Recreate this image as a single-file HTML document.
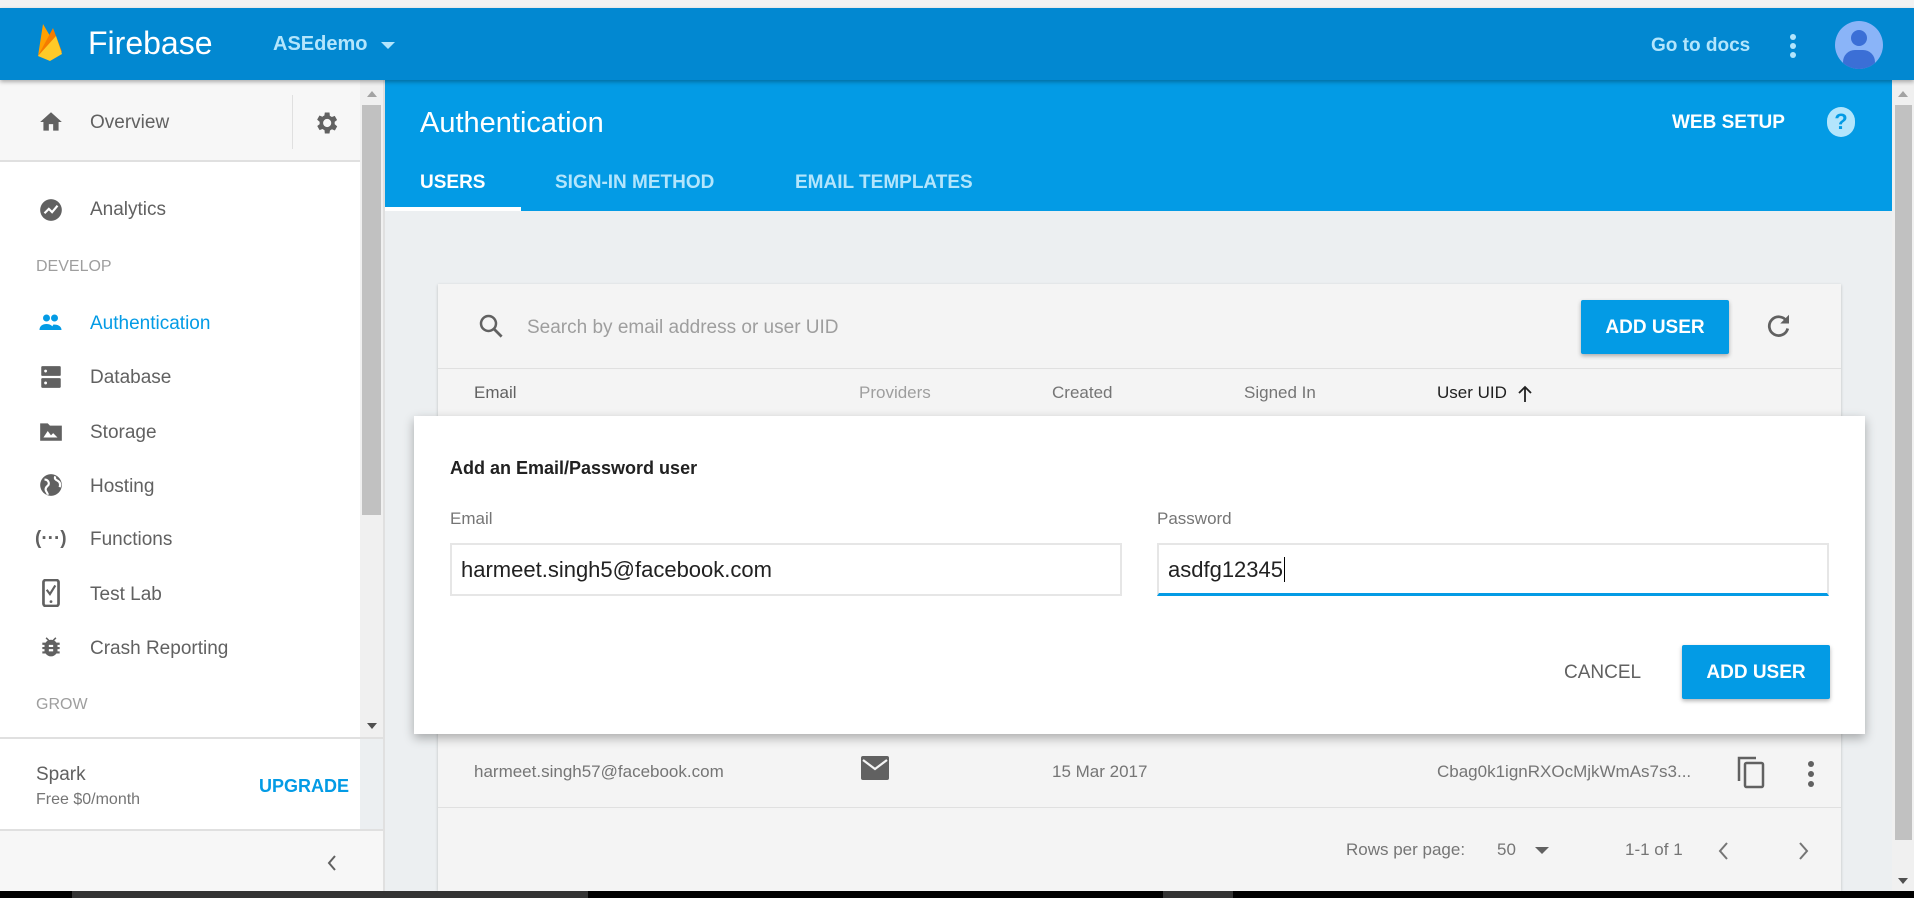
<!DOCTYPE html>
<html><head><meta charset="utf-8"><style>
*{box-sizing:border-box;margin:0;padding:0}
body{width:1914px;height:898px;overflow:hidden;position:relative;background:#eceff1;font-family:"Liberation Sans",Roboto,sans-serif}
.a{position:absolute;white-space:nowrap}
.t{margin-top:2px}
svg{display:block}
</style></head><body>
<div class="a" style="left:0;top:0;width:1914px;height:8px;background:#f2f2f2"></div>
<!-- top bar -->
<div class="a" style="left:0;top:8px;width:1914px;height:72px;background:#0288d1;box-shadow:0 2px 4px rgba(0,0,0,.3);z-index:3">
 <svg class="a" style="left:36px;top:14px" width="28" height="40" viewBox="0 0 28 40"><path d="M2 34 L7 2 L14 14 Z" fill="#ffa000"/><path d="M2 34 L17 6 L26 30 Z" fill="#f57c00"/><path d="M2 34 L20 14 L26 32 L14 39 Z" fill="#ffca28"/></svg>
 <div class="a" style="left:88px;top:17px;font-size:32px;color:#fff">Firebase</div>
 <div class="a" style="left:273px;top:25px;font-size:20px;color:#b3e5fc;font-weight:bold">ASEdemo</div>
 <div class="a" style="left:381px;top:34px;border-left:7px solid transparent;border-right:7px solid transparent;border-top:7px solid #b3e5fc"></div>
 <div class="a" style="left:1651px;top:27px;font-size:19px;color:#b3e5fc;font-weight:bold">Go to docs</div>
 <div class="a" style="left:1790px;top:26px;width:6px;height:6px;border-radius:3px;background:#b3e5fc;box-shadow:0 9px 0 #b3e5fc,0 18px 0 #b3e5fc"></div>
 <div class="a" style="left:1835px;top:13px;width:48px;height:48px;border-radius:24px;background:#8ab4f8;overflow:hidden">
  <div class="a" style="left:16px;top:9px;width:16px;height:16px;border-radius:8px;background:#3b6fd6"></div>
  <div class="a" style="left:8px;top:29px;width:32px;height:24px;border-radius:12px;background:#3b6fd6"></div>
 </div>
</div>
<!-- sidebar -->
<div class="a" style="left:0;top:80px;width:360px;height:811px;background:#fff"></div>
<div class="a" style="left:0;top:80px;width:360px;height:82px;background:#f7f7f7;border-bottom:2px solid #e0e0e0"></div>
<div class="a" style="left:292px;top:95px;width:1px;height:54px;background:#e0e0e0"></div>
<div class="a" style="left:360px;top:80px;width:23px;height:658px;background:#f0f0f0"></div>
<div class="a" style="left:362px;top:105px;width:19px;height:410px;background:#c1c1c1"></div>
<div class="a" style="left:367px;top:91px;border-left:5px solid transparent;border-right:5px solid transparent;border-bottom:6px solid #a3a3a3"></div>
<div class="a" style="left:367px;top:723px;border-left:5px solid transparent;border-right:5px solid transparent;border-top:6px solid #505050"></div>
<div class="a" style="left:383px;top:80px;width:2px;height:811px;background:#e0e0e0"></div>
<svg class="a" style="left:38px;top:109px" width="26" height="26" viewBox="0 0 24 24"><path d="M10 20v-6h4v6h5v-8h3L12 3 2 12h3v8z" fill="#616161"/></svg>
<div class="a" style="left:90px;top:112px;font-size:19px;color:#616161">Overview</div>
<svg class="a" style="left:312px;top:109px" width="28" height="28" viewBox="0 0 24 24"><path d="M19.4 13a7 7 0 000-2l2.1-1.6-2-3.5-2.5 1a7 7 0 00-1.7-1L15 3h-4l-.4 2.6a7 7 0 00-1.7 1l-2.5-1-2 3.5L6.6 11a7 7 0 000 2l-2.1 1.6 2 3.5 2.5-1a7 7 0 001.7 1L11 21h4l.4-2.6a7 7 0 001.7-1l2.5 1 2-3.5zM13 15.5A3.5 3.5 0 1113 8.5a3.5 3.5 0 010 7z" fill="#616161"/></svg>
<svg class="a" style="left:38px;top:197px" width="26" height="26" viewBox="0 0 24 24"><circle cx="12" cy="12" r="10" fill="#616161"/><path d="M6 15l4-4 3 3 5-6" stroke="#fff" stroke-width="2" fill="none"/></svg>
<div class="a" style="left:90px;top:199px;font-size:19px;color:#616161">Analytics</div>
<div class="a" style="left:36px;top:258px;font-size:16px;color:#9e9e9e">DEVELOP</div>
<svg class="a" style="left:37px;top:310px" width="27" height="24" viewBox="0 0 24 24"><circle cx="8" cy="8" r="3.5" fill="#039be5"/><circle cx="16" cy="8" r="3.5" fill="#039be5"/><path d="M1 20c0-4 3-6 7-6s7 2 7 6zM13 20c0-3 1-4 2-5.5 4 0 8 1.5 8 5.5z" fill="#039be5"/></svg>
<div class="a" style="left:90px;top:313px;font-size:19px;color:#039be5">Authentication</div>
<svg class="a" style="left:38px;top:364px" width="26" height="26" viewBox="0 0 24 24"><rect x="3" y="2" width="18" height="9" rx="1" fill="#616161"/><rect x="3" y="13" width="18" height="9" rx="1" fill="#616161"/><circle cx="7" cy="6.5" r="1.3" fill="#fff"/><circle cx="7" cy="17.5" r="1.3" fill="#fff"/></svg>
<div class="a" style="left:90px;top:367px;font-size:19px;color:#616161">Database</div>
<svg class="a" style="left:38px;top:418px" width="26" height="26" viewBox="0 0 24 24"><path d="M2 5h7l2 2h11v14H2z" fill="#616161"/><path d="M5 18l4-6 3 4 2-2 4 4z" fill="#fff"/></svg>
<div class="a" style="left:90px;top:422px;font-size:19px;color:#616161">Storage</div>
<svg class="a" style="left:38px;top:472px" width="26" height="26" viewBox="0 0 24 24"><circle cx="12" cy="12" r="10" fill="#616161"/><path d="M6 7c3 0 4 2 4 4s-3 2-3 5c0 2 2 3 2 5M16 4c-1 2 0 3 2 4s3 3 2 6" stroke="#fff" stroke-width="2" fill="none"/></svg>
<div class="a" style="left:90px;top:476px;font-size:19px;color:#616161">Hosting</div>
<div class="a" style="left:35px;top:528px;font-size:19px;color:#616161;font-weight:bold">(···)</div>
<div class="a" style="left:90px;top:529px;font-size:19px;color:#616161">Functions</div>
<svg class="a" style="left:38px;top:579px" width="26" height="28" viewBox="0 0 24 26"><rect x="5" y="1" width="14" height="24" rx="2" fill="none" stroke="#616161" stroke-width="2.5"/><path d="M8 10l3 4 5-8" stroke="#616161" stroke-width="2" fill="none"/><circle cx="12" cy="21" r="1.3" fill="#616161"/></svg>
<div class="a" style="left:90px;top:584px;font-size:19px;color:#616161">Test Lab</div>
<svg class="a" style="left:38px;top:634px" width="26" height="26" viewBox="0 0 24 24"><path d="M20 8h-3a6 6 0 00-2-2l2-2-1-1-2.5 2.5a6 6 0 00-3 0L8 3 7 4l2 2a6 6 0 00-2 2H4v2h2v2H4v2h2v2H4v2h3a6 6 0 0010 0h3v-2h-2v-2h2v-2h-2v-2h2zm-6 8h-4v-2h4zm0-4h-4v-2h4z" fill="#616161"/></svg>
<div class="a" style="left:90px;top:638px;font-size:19px;color:#616161">Crash Reporting</div>
<div class="a" style="left:36px;top:696px;font-size:16px;color:#9e9e9e">GROW</div>
<div class="a" style="left:0;top:737px;width:383px;height:2px;background:#e0e0e0"></div>
<div class="a" style="left:36px;top:764px;font-size:19px;color:#616161">Spark</div>
<div class="a" style="left:36px;top:791px;font-size:16px;color:#757575">Free $0/month</div>
<div class="a" style="left:259px;top:776px;font-size:18px;color:#039be5;font-weight:bold">UPGRADE</div>
<div class="a" style="left:0;top:829px;width:383px;height:62px;background:#f7f7f7;border-top:2px solid #e0e0e0"></div>
<svg class="a" style="left:325px;top:853px" width="14" height="20" viewBox="0 0 14 20"><path d="M10 3L4 10l6 7" stroke="#616161" stroke-width="2" fill="none"/></svg>
<!-- header -->
<div class="a" style="left:385px;top:80px;width:1507px;height:131px;background:#039be5"></div>
<div class="a" style="left:420px;top:107px;font-size:29px;color:#fff">Authentication</div>
<div class="a" style="left:1672px;top:112px;font-size:19px;color:#fff;font-weight:bold">WEB SETUP</div>
<div class="a" style="left:1827px;top:107px;width:28px;height:30px;border-radius:15px;background:#b3e5fc;color:#039be5;font-weight:bold;font-size:22px;text-align:center;line-height:30px">?</div>
<div class="a" style="left:420px;top:172px;font-size:19px;color:#fff;font-weight:bold">USERS</div>
<div class="a" style="left:555px;top:172px;font-size:19px;color:#b3e5fc;font-weight:bold">SIGN-IN METHOD</div>
<div class="a" style="left:795px;top:172px;font-size:19px;color:#b3e5fc;font-weight:bold">EMAIL TEMPLATES</div>
<div class="a" style="left:385px;top:207px;width:136px;height:4px;background:#fff"></div>
<!-- right scrollbar -->
<div class="a" style="left:1892px;top:80px;width:22px;height:811px;background:#f0f0f0"></div>
<div class="a" style="left:1895px;top:105px;width:17px;height:735px;background:#c1c1c1"></div>
<div class="a" style="left:1898px;top:91px;border-left:5px solid transparent;border-right:5px solid transparent;border-bottom:6px solid #a3a3a3"></div>
<div class="a" style="left:1898px;top:878px;border-left:5px solid transparent;border-right:5px solid transparent;border-top:6px solid #505050"></div>
<!-- card -->
<div class="a" style="left:438px;top:284px;width:1403px;height:607px;background:#f4f4f4;box-shadow:0 1px 3px rgba(0,0,0,.2)"></div>
<svg class="a" style="left:476px;top:311px" width="30" height="30" viewBox="0 0 24 24"><circle cx="10" cy="10" r="6" stroke="#616161" stroke-width="2" fill="none"/><path d="M14.5 14.5l6 6" stroke="#616161" stroke-width="2.2"/></svg>
<div class="a" style="left:527px;top:317px;font-size:19px;color:#9e9e9e">Search by email address or user UID</div>
<div class="a" style="left:1581px;top:300px;width:148px;height:54px;background:#039be5;border-radius:2px;box-shadow:0 2px 4px rgba(0,0,0,.3);color:#fff;font-weight:bold;font-size:19px;text-align:center;line-height:56px">ADD USER</div>
<svg class="a" style="left:1764px;top:311px" width="30" height="30" viewBox="0 0 24 24"><path d="M18 8A7.5 7.5 0 1019 14" stroke="#616161" stroke-width="2.2" fill="none"/><path d="M20 3v7h-7z" fill="#616161"/></svg>
<div class="a" style="left:438px;top:368px;width:1403px;height:1px;background:#e0e0e0"></div>
<div class="a" style="left:474px;top:383px;font-size:17px;color:#616161">Email</div>
<div class="a" style="left:859px;top:383px;font-size:17px;color:#9e9e9e">Providers</div>
<div class="a" style="left:1052px;top:383px;font-size:17px;color:#757575">Created</div>
<div class="a" style="left:1244px;top:383px;font-size:17px;color:#757575">Signed In</div>
<div class="a" style="left:1437px;top:383px;font-size:17px;color:#212121">User UID</div>
<svg class="a" style="left:1516px;top:384px" width="18" height="20" viewBox="0 0 18 20"><path d="M9 18V3M3 9l6-6 6 6" stroke="#212121" stroke-width="1.8" fill="none"/></svg>
<div class="a" style="left:474px;top:762px;font-size:17px;color:#757575">harmeet.singh57@facebook.com</div>
<svg class="a" style="left:861px;top:756px" width="28" height="24" viewBox="0 0 28 24"><rect x="0" y="0" width="28" height="24" rx="2" fill="#616161"/><path d="M2 4l12 9 12-9" stroke="#f4f4f4" stroke-width="2.2" fill="none"/></svg>
<div class="a" style="left:1052px;top:762px;font-size:17px;color:#757575">15 Mar 2017</div>
<div class="a" style="left:1437px;top:762px;font-size:17px;color:#757575">Cbag0k1ignRXOcMjkWmAs7s3...</div>
<svg class="a" style="left:1736px;top:755px" width="30" height="34" viewBox="0 0 30 34"><path d="M3 26V3h17" stroke="#616161" stroke-width="2.5" fill="none"/><rect x="9" y="8" width="18" height="24" rx="1.5" stroke="#616161" stroke-width="2.5" fill="none"/></svg>
<div class="a" style="left:1808px;top:761px;width:6px;height:6px;border-radius:3px;background:#616161;box-shadow:0 10px 0 #616161,0 20px 0 #616161"></div>
<div class="a" style="left:438px;top:807px;width:1403px;height:1px;background:#e0e0e0"></div>
<div class="a" style="left:1346px;top:840px;font-size:17px;color:#757575">Rows per page:</div>
<div class="a" style="left:1497px;top:840px;font-size:17px;color:#757575">50</div>
<div class="a" style="left:1535px;top:847px;border-left:7px solid transparent;border-right:7px solid transparent;border-top:7px solid #616161"></div>
<div class="a" style="left:1625px;top:840px;font-size:17px;color:#757575">1-1 of 1</div>
<svg class="a" style="left:1716px;top:840px" width="16" height="22" viewBox="0 0 16 22"><path d="M11 3l-7 8 7 8" stroke="#757575" stroke-width="2" fill="none"/></svg>
<svg class="a" style="left:1795px;top:840px" width="16" height="22" viewBox="0 0 16 22"><path d="M5 3l7 8-7 8" stroke="#757575" stroke-width="2" fill="none"/></svg>
<!-- dialog -->
<div class="a" style="left:414px;top:416px;width:1451px;height:318px;background:#fff;box-shadow:0 4px 10px rgba(0,0,0,.3)">
 <div class="a" style="left:36px;top:42px;font-size:18px;color:#212121;font-weight:bold">Add an Email/Password user</div>
 <div class="a" style="left:36px;top:93px;font-size:17px;color:#757575">Email</div>
 <div class="a" style="left:743px;top:93px;font-size:17px;color:#757575">Password</div>
 <div class="a" style="left:36px;top:127px;width:672px;height:53px;border:2px solid #e6e6e6"></div>
 <div class="a" style="left:47px;top:141px;font-size:22px;color:#212121">harmeet.singh5@facebook.com</div>
 <div class="a" style="left:743px;top:127px;width:672px;height:53px;border:2px solid #e6e6e6;border-bottom:3px solid #039be5"></div>
 <div class="a" style="left:754px;top:141px;font-size:22px;color:#212121">asdfg12345<span style="border-left:1px solid #000;margin-left:1px"></span></div>
 <div class="a" style="left:1150px;top:246px;font-size:19px;color:#616161">CANCEL</div>
 <div class="a" style="left:1268px;top:229px;width:148px;height:54px;background:#039be5;border-radius:2px;box-shadow:0 2px 4px rgba(0,0,0,.3);color:#fff;font-weight:bold;font-size:19px;text-align:center;line-height:56px">ADD USER</div>
</div>
<!-- bottom bar -->
<div class="a" style="left:0;top:891px;width:1914px;height:7px;background:#000"></div>
<div class="a" style="left:72px;top:891px;width:516px;height:7px;background:#333"></div>
<div class="a" style="left:1163px;top:891px;width:70px;height:7px;background:#333"></div>
</body></html>
